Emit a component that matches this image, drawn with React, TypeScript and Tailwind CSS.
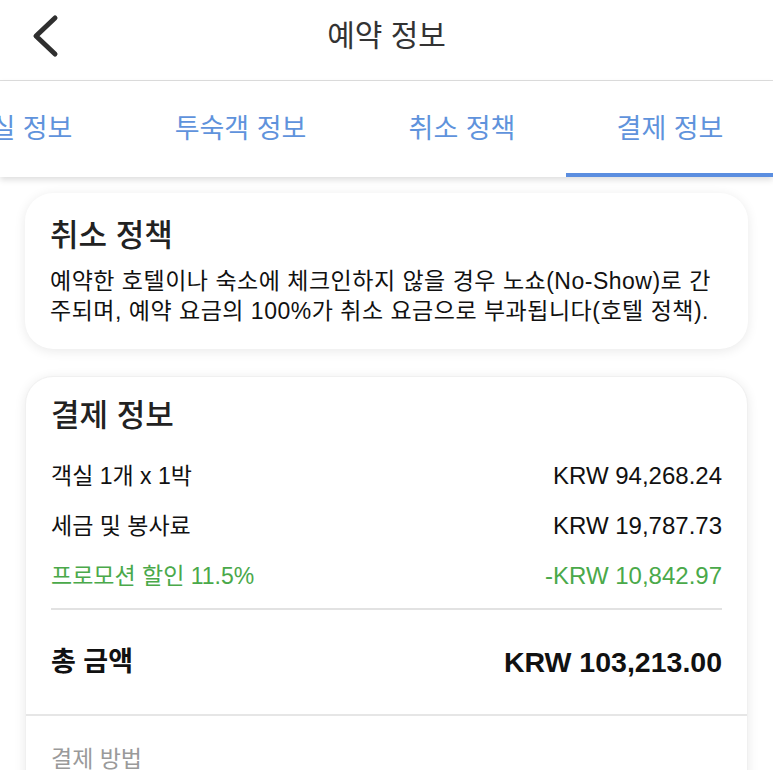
import React from "react";

const tabs = [
    { label: "객실 정보", w: "w-[208px]" },
    { label: "투숙객 정보", w: "w-[235px]" },
    { label: "취소 정책", w: "w-[208px]" },
    { label: "결제 정보", w: "w-[208px]", active: true },
];

const lines = [
    { label: "객실 1개 x 1박", value: "KRW 94,268.24" },
    { label: "세금 및 봉사료", value: "KRW 19,787.73" },
    { label: "프로모션 할인 11.5%", value: "-KRW 10,842.97", promo: true },
];

export default function App() {
    return (
        <div className="min-h-screen bg-white text-[#111] font-['Liberation_Sans','Noto_Sans_CJK_KR',sans-serif] overflow-hidden">
            {/* Header */}
            <header className="relative h-[81px] flex items-center justify-center border-b border-[#dedede]">
                <button className="absolute left-[23px] top-[8px] p-1">
                    <svg width="34" height="48" viewBox="0 0 34 48" fill="none">
                        <path d="M28 6 L9 24 L28 42" stroke="#2f2f2f" strokeWidth="5" strokeLinecap="round" strokeLinejoin="round" />
                    </svg>
                </button>
                <h1 className="text-[30px] text-[#333] leading-none -mt-[8px]">예약 정보</h1>
            </header>

            {/* Tabs (scrolled to the last tab) */}
            <div className="relative z-10 h-[96px] bg-white shadow-[0_3px_6px_rgba(0,0,0,0.13)] overflow-hidden">
                <div className="flex h-full -ml-[85px] w-max">
                    {tabs.map((t) => (
                        <div key={t.label} className={`relative ${t.w} h-full flex items-center justify-center`}>
                            <span className="text-[27px] text-[#5f93dc] leading-none">{t.label}</span>
                            {t.active && <div className="absolute left-0 right-0 bottom-0 h-[4px] bg-[#5b8ee0]" />}
                        </div>
                    ))}
                </div>
            </div>

            <main className="px-[25px] pt-[16px]">
                {/* Cancellation policy */}
                <section className="rounded-[28px] bg-white shadow-[0_2px_12px_rgba(0,0,0,0.09)] px-[25px] pt-[25px] pb-[23px]">
                    <h2 className="text-[31px] font-medium leading-[36px] text-[#222]">취소 정책</h2>
                    <p className="mt-[12px] text-[23px] leading-[30px] tracking-[0.5px] break-all">
                        예약한 호텔이나 숙소에 체크인하지 않을 경우 노쇼(No-Show)로 간주되며, 예약 요금의 100%가 취소 요금으로 부과됩니다(호텔 정책).
                    </p>
                </section>

                {/* Payment info */}
                <section className="mt-[27px] rounded-t-[28px] bg-white shadow-[0_2px_12px_rgba(0,0,0,0.09)] border border-[#f0f0f0]">
                    <div className="px-[25px] pt-[21px]">
                        <h2 className="text-[31px] font-medium leading-[36px] text-[#222]">결제 정보</h2>
                        <div className="mt-[17px]">
                            {lines.map((l) => (
                                <div
                                    key={l.label}
                                    className={`h-[50px] flex items-center justify-between ${l.promo ? "text-[#4aa94a]" : "text-[#111]"}`}
                                >
                                    <span className="text-[23px]">{l.label}</span>
                                    <span className="text-[24px]">{l.value}</span>
                                </div>
                            ))}
                        </div>
                        <div className="mt-[7px] h-[2px] bg-[#e2e2e2]" />
                        <div className="h-[104px] flex items-center justify-between font-bold">
                            <span className="text-[27px]">총 금액</span>
                            <span className="text-[28.5px]">KRW 103,213.00</span>
                        </div>
                    </div>
                    <div className="border-t-2 border-[#e6e6e6] px-[25px] pt-[26px] pb-[30px]">
                        <span className="text-[23px] text-[#9a9a9a]">결제 방법</span>
                    </div>
                </section>
            </main>
        </div>
    );
}
